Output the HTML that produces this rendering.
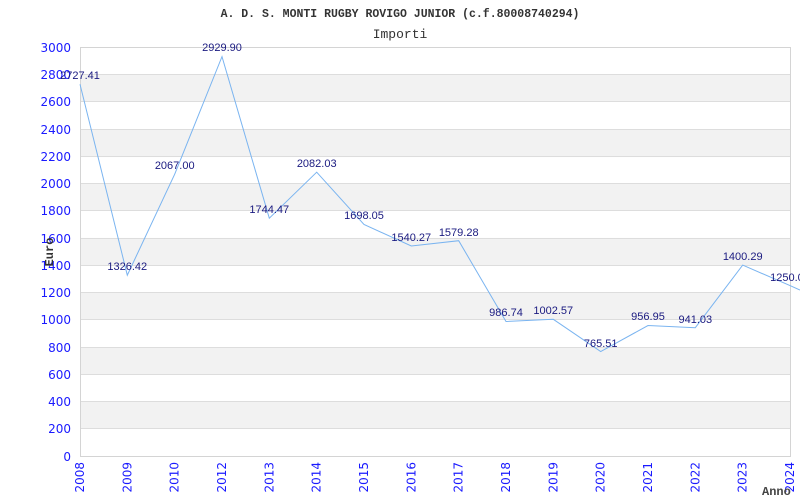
<!DOCTYPE html>
<html><head><meta charset="utf-8"><style>
html,body{margin:0;padding:0;background:#fff;width:800px;height:500px;overflow:hidden}
svg{display:block}
.t{font-family:"Liberation Mono",monospace;fill:#333}
.y{font-family:"DejaVu Sans","Liberation Sans",sans-serif;font-size:12px;fill:#1a1aff}
.v{font-family:"Liberation Sans",sans-serif;font-size:11px;fill:#1a1a80}
</style></head><body>
<svg width="800" height="500" xmlns="http://www.w3.org/2000/svg">
<text class="t" x="400" y="17" text-anchor="middle" font-size="11.5" font-weight="bold">A. D. S. MONTI RUGBY ROVIGO JUNIOR (c.f.80008740294)</text>
<text class="t" x="400" y="38" text-anchor="middle" font-size="13">Importi</text>
<g fill="#f2f2f2">
<rect x="80.5" y="74.3" width="710" height="27.3"/>
<rect x="80.5" y="129.8" width="710" height="27.3"/>
<rect x="80.5" y="183.3" width="710" height="27.3"/>
<rect x="80.5" y="237.9" width="710" height="27.3"/>
<rect x="80.5" y="292.4" width="710" height="27.3"/>
<rect x="80.5" y="347" width="710" height="27.3"/>
<rect x="80.5" y="401.5" width="710" height="27.3"/>
</g>
<g stroke="#dddddd" stroke-width="1">
<line x1="80" x2="790" y1="74.5" y2="74.5"/><line x1="80" x2="790" y1="101.5" y2="101.5"/>
<line x1="80" x2="790" y1="129.5" y2="129.5"/><line x1="80" x2="790" y1="156.5" y2="156.5"/>
<line x1="80" x2="790" y1="183.5" y2="183.5"/><line x1="80" x2="790" y1="210.5" y2="210.5"/>
<line x1="80" x2="790" y1="238.5" y2="238.5"/><line x1="80" x2="790" y1="265.5" y2="265.5"/>
<line x1="80" x2="790" y1="292.5" y2="292.5"/><line x1="80" x2="790" y1="319.5" y2="319.5"/>
<line x1="80" x2="790" y1="347.5" y2="347.5"/><line x1="80" x2="790" y1="374.5" y2="374.5"/>
<line x1="80" x2="790" y1="401.5" y2="401.5"/><line x1="80" x2="790" y1="428.5" y2="428.5"/>
</g>
<rect x="80.5" y="47.5" width="710" height="409" fill="none" stroke="#d4d4d4"/>
<g class="y" text-anchor="end">
<text x="71" y="52">3000</text><text x="71" y="79">2800</text><text x="71" y="106">2600</text>
<text x="71" y="134">2400</text><text x="71" y="161">2200</text><text x="71" y="188">2000</text>
<text x="71" y="215">1800</text><text x="71" y="243">1600</text><text x="71" y="270">1400</text>
<text x="71" y="297">1200</text><text x="71" y="324">1000</text><text x="71" y="352">800</text>
<text x="71" y="379">600</text><text x="71" y="406">400</text><text x="71" y="433">200</text>
<text x="71" y="461">0</text>
</g>
<text class="t" font-size="12" font-weight="bold" transform="translate(53,252) rotate(-90)" text-anchor="middle" style="fill:#333">Euro</text>
<g class="y" text-anchor="end">
<text transform="translate(84,462) rotate(-90)">2008</text>
<text transform="translate(131.3,462) rotate(-90)">2009</text>
<text transform="translate(178.7,462) rotate(-90)">2010</text>
<text transform="translate(226,462) rotate(-90)">2012</text>
<text transform="translate(273.3,462) rotate(-90)">2013</text>
<text transform="translate(320.7,462) rotate(-90)">2014</text>
<text transform="translate(368,462) rotate(-90)">2015</text>
<text transform="translate(415.3,462) rotate(-90)">2016</text>
<text transform="translate(462.7,462) rotate(-90)">2017</text>
<text transform="translate(510,462) rotate(-90)">2018</text>
<text transform="translate(557.3,462) rotate(-90)">2019</text>
<text transform="translate(604.7,462) rotate(-90)">2020</text>
<text transform="translate(652,462) rotate(-90)">2021</text>
<text transform="translate(699.3,462) rotate(-90)">2022</text>
<text transform="translate(746.7,462) rotate(-90)">2023</text>
<text transform="translate(794,462) rotate(-90)">2024</text>
</g>
<text class="t" x="762" y="495" font-size="12" font-weight="bold" style="fill:#444">Anno</text>
<polyline fill="none" stroke="#7ab4f0" stroke-width="1" points="80,84.2 127.3,275.2 174.7,174.2 222,56.6 269.3,218.2 316.7,172.2 364,224.5 411.3,246 458.7,240.7 506,321.5 553.3,319.3 600.7,351.6 648,325.5 695.3,327.7 742.7,265.1 790,285.6 800,290"/>
<g class="v" text-anchor="middle">
<text x="80" y="79">2727.41</text>
<text x="127.3" y="270">1326.42</text>
<text x="174.7" y="169">2067.00</text>
<text x="222" y="51">2929.90</text>
<text x="269.3" y="213">1744.47</text>
<text x="316.7" y="167">2082.03</text>
<text x="364" y="219">1698.05</text>
<text x="411.3" y="241">1540.27</text>
<text x="458.7" y="236">1579.28</text>
<text x="506" y="316">986.74</text>
<text x="553.3" y="314">1002.57</text>
<text x="600.7" y="347">765.51</text>
<text x="648" y="320">956.95</text>
<text x="695.3" y="323">941.03</text>
<text x="742.7" y="260">1400.29</text>
<text x="790" y="281">1250.00</text>
</g>
</svg>
</body></html>
